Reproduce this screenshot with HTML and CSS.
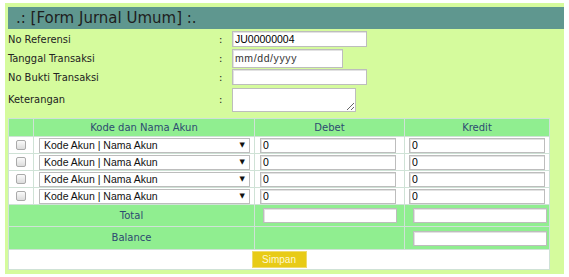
FILE: index.html
```html
<!DOCTYPE html>
<html lang="id">
<head>
    <meta charset="UTF-8">
    <title>Form Jurnal Umum</title>
    <link rel="stylesheet" href="styles.css">
</head>
<body>

    <div class="wrap">
        <div class="judul">.: [Form Jurnal Umum] :.</div>

        <div class="form-atas">
            <label class="lbl">No Referensi</label>
            <span class="titik">:</span>
            <div class="isi"><input type="text" class="inp inp-ref" value="JU00000004"></div>

            <label class="lbl">Tanggal Transaksi</label>
            <span class="titik">:</span>
            <div class="isi"><input type="text" class="inp inp-tgl" value="mm/dd/yyyy"></div>

            <label class="lbl">No Bukti Transaksi</label>
            <span class="titik">:</span>
            <div class="isi"><input type="text" class="inp inp-ref"></div>

            <label class="lbl">Keterangan</label>
            <span class="titik">:</span>
            <div class="isi"><textarea class="ket"></textarea></div>
        </div>

        <table class="jurnal">
            <tr class="kepala">
                <th class="c-cek"></th>
                <th class="c-akun">Kode dan Nama Akun</th>
                <th class="c-debet">Debet</th>
                <th class="c-kredit">Kredit</th>
            </tr>
            <tr class="baris">
                <td class="tengah"><input type="checkbox" class="cek"></td>
                <td><div class="pilih"><select><option>Kode Akun | Nama Akun</option></select></div></td>
                <td><input type="text" class="inp angka" value="0"></td>
                <td><input type="text" class="inp angka" value="0"></td>
            </tr>
            <tr class="baris">
                <td class="tengah"><input type="checkbox" class="cek"></td>
                <td><div class="pilih"><select><option>Kode Akun | Nama Akun</option></select></div></td>
                <td><input type="text" class="inp angka" value="0"></td>
                <td><input type="text" class="inp angka" value="0"></td>
            </tr>
            <tr class="baris">
                <td class="tengah"><input type="checkbox" class="cek"></td>
                <td><div class="pilih"><select><option>Kode Akun | Nama Akun</option></select></div></td>
                <td><input type="text" class="inp angka" value="0"></td>
                <td><input type="text" class="inp angka" value="0"></td>
            </tr>
            <tr class="baris">
                <td class="tengah"><input type="checkbox" class="cek"></td>
                <td><div class="pilih"><select><option>Kode Akun | Nama Akun</option></select></div></td>
                <td><input type="text" class="inp angka" value="0"></td>
                <td><input type="text" class="inp angka" value="0"></td>
            </tr>
            <tr class="jumlah">
                <td colspan="2" class="tengah">Total</td>
                <td><input type="text" class="inp total"></td>
                <td><input type="text" class="inp total"></td>
            </tr>
            <tr class="jumlah saldo">
                <td colspan="2" class="tengah">Balance</td>
                <td></td>
                <td><input type="text" class="inp total"></td>
            </tr>
            <tr class="aksi">
                <td colspan="4" class="tengah"><button class="simpan">Simpan</button></td>
            </tr>
        </table>
    </div>

</body>
</html>
```

FILE: styles.css
```css
body { margin: 0; padding: 0; background: #fff; font-family: "DejaVu Sans Condensed", "DejaVu Sans", sans-serif; color: #222; }

.wrap { margin: 3px 0 0 5px; width: 556px; padding: 4px 0 4px 3px; background: #d5fb9d; }

.judul { height: 22px; line-height: 22px; background: #5f978f; color: #1e1e1e; font-family: "DejaVu Sans", sans-serif; font-size: 15px; padding-left: 8px; }

.form-atas { display: grid; grid-template-columns: 211px 13px auto; grid-template-rows: 18px 20px 18px 26px; align-items: center; margin-top: 1px; }
.lbl { font-size: 11px; }
.titik { font-size: 11px; }
.isi { display: flex; align-items: center; }

.inp { box-sizing: border-box; border: 1px solid #bdbdbd; box-shadow: inset 1px 1px 0 #e2e2e2; background: #fff; font-family: "Liberation Sans", Arial, sans-serif; font-size: 10.5px; padding: 0 2px; margin: 0; outline: none; }
.inp-ref { width: 135px; height: 16px; }
.inp-tgl { width: 111px; height: 19px; letter-spacing: 0.6px; color: #333; }
.ket { box-sizing: border-box; width: 124px; height: 24px; border: 1px solid #bdbdbd; margin: 2px 0 0; resize: both; }

.jurnal { margin-top: 6px; width: 542px; border-collapse: collapse; background: #fff; table-layout: fixed; }
.jurnal th, .jurnal td { border: 1px solid #cfe2d6; padding: 0; line-height: 12px; }
.c-cek { width: 24px; }
.c-akun { width: 220px; }
.c-debet { width: 149px; }
.kepala th { height: 17px; background: #90ee90; font-family: "DejaVu Sans", sans-serif; font-weight: normal; font-size: 10px; color: #2d4b70; }
.baris td { height: 16px; }
.baris td:nth-child(2), .baris td:nth-child(3) { padding-left: 5px; }
.baris td:nth-child(4) { padding-left: 4px; }
.tengah { text-align: center; }

.cek { appearance: none; display: block; width: 10px; height: 10px; margin: 0 auto; border: 1px solid #aaa; border-radius: 2px; background: linear-gradient(#fafafa, #dcdcdc); }

.pilih { position: relative; width: 211px; }
.pilih select { appearance: none; display: block; box-sizing: border-box; width: 100%; height: 15px; border: 1px solid #bdbdbd; background: #fff; font-family: "Liberation Sans", Arial, sans-serif; font-size: 10.5px; line-height: 13px; padding: 0 4px; margin: 0; color: #111; border-radius: 0; }
.pilih::after { content: "\25BC"; position: absolute; right: 5px; top: 4px; font-family: "DejaVu Sans", sans-serif; font-size: 7px; line-height: 7px; color: #111; pointer-events: none; }

.angka { width: 136px; height: 15px; display: block; }

.jumlah td { height: 21px; background: #90ee90; font-family: "DejaVu Sans", sans-serif; font-size: 10px; color: #2d4b70; }
.saldo td { height: 22px; }
.jumlah td:nth-child(2), .jumlah td:nth-child(3) { padding-left: 8px; }
.total { width: 134px; height: 15px; display: block; }

.aksi td { height: 19px; }
.simpan { width: 55px; height: 17px; border: 1px solid #efdc6a; background: #e8cb16; color: #fff8d0; font-family: "Liberation Sans", Arial, sans-serif; font-size: 10px; line-height: 14px; padding: 0; display: block; margin: 0 auto; }
```
